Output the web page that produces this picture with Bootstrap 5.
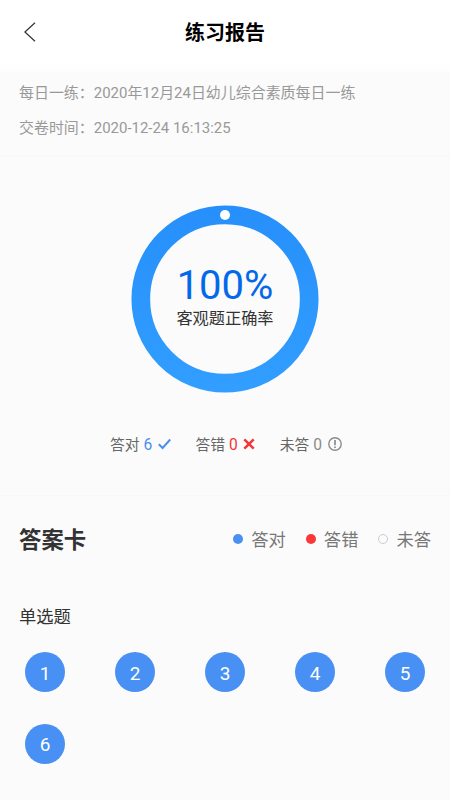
<!DOCTYPE html>
<html lang="zh-CN">
<head>
<meta charset="utf-8">
<meta name="viewport" content="width=device-width, initial-scale=1">
<title>练习报告</title>
<link href="https://cdn.jsdelivr.net/npm/bootstrap@5.3.0/dist/css/bootstrap.min.css" rel="stylesheet">
<style>
  body { font-family: Roboto, "Noto Sans CJK SC", sans-serif; background: #fbfbfb; color: #333; width: 100%; height: 800px; overflow: hidden; }
  .top-bar { height: 72px; padding: 0 24px 8px; background: linear-gradient(#fff 60px, #fdfdfd); }
  .top-bar h1 { font-size: 20px; color: #000; line-height: 30px; padding-top: 1px; }
  .back-btn { width: 12px; }
  .meta { height: 84px; padding: 9px 19px 0; font-size: 14.96px; line-height: 24px; color: #999; border-bottom: 1px solid #f8f8f8; }
  .meta p + p { margin-top: 11px; }
  .score { height: 340px; padding-top: 49px; border-bottom: 1px solid #f8f8f8; }
  .ring { width: 188px; height: 188px; }
  .ring-label { padding-bottom: 6px; }
  .percent { font-size: 40px; line-height: 46px; color: #0468ea; }
  .caption-text { font-size: 16.2px; line-height: 20px; }
  .stats { margin-top: 40px; height: 24px; font-size: 14.8px; line-height: 24px; color: #666; padding-left: 110px; gap: 24.5px; }
  .stat { gap: 4px; }
  .stat svg { margin-left: 1.5px; margin-bottom: 2px; }
  .blue { color: #4a90e8; }
  .red { color: #f43636; }
  .grey { color: #8b8b8b; }
  .digit { font-size: 15.6px; }
  .sheet-head { height: 90px; padding: 0 19px 2px; }
  .sheet-head h2 { font-size: 22.4px; line-height: 32px; }
  .legend { font-size: 17.3px; line-height: 26px; color: #777; gap: 20px; }
  .legend-item { gap: 8px; }
  .dot { width: 10px; height: 10px; margin-bottom: 2px; }
  .dot-right { background: #4a90f0; }
  .dot-wrong { background: #fb3838; }
  .dot-blank { border: 1px solid #ccc; }
  .kind { font-size: 17.3px; line-height: 26px; padding-left: 19px; margin-top: 18px; }
  .answers { display: grid; grid-template-columns: repeat(5, 90px); row-gap: 31.5px; margin-top: 22.4px; }
  .num { width: 40px; height: 40px; background: #4890f4; color: #fff; font-size: 19px; line-height: 1; padding-top: 2px; }
</style>
</head>
<body>
<header class="top-bar d-flex align-items-center">
  <div class="back-btn d-flex" role="button" aria-label="返回">
    <svg width="12" height="20" viewBox="0 0 12 20" fill="none" stroke="#333" stroke-width="1.2"><path d="M11 .8.9 10 11 19.2"/></svg>
  </div>
  <h1 class="fw-bold text-center flex-grow-1 mb-0">练习报告</h1>
  <div class="back-btn"></div>
</header>

<section class="meta">
  <p class="mb-0">每日一练：2020年12月24日幼儿综合素质每日一练</p>
  <p class="mb-0">交卷时间：2020-12-24 16:13:25</p>
</section>

<section class="score">
  <div class="ring position-relative mx-auto">
    <svg width="188" height="188" viewBox="0 0 188 188" fill="none">
      <defs><linearGradient id="ringFill" x1="0" y1="0" x2="0" y2="188" gradientUnits="userSpaceOnUse"><stop stop-color="#268ffb"/><stop offset="1" stop-color="#329eff"/></linearGradient></defs>
      <circle cx="94" cy="94" r="84.2" stroke="url(#ringFill)" stroke-width="18.7"/>
      <circle cx="94" cy="10" r="5" fill="#fff"/>
    </svg>
    <div class="ring-label position-absolute top-0 start-0 w-100 h-100 d-flex flex-column align-items-center justify-content-center">
      <div class="percent">100%</div>
      <div class="caption-text">客观题正确率</div>
    </div>
  </div>
  <div class="stats d-flex">
    <div class="stat d-flex align-items-center"><span>答对</span><span class="digit blue">6</span>
      <svg width="13" height="12" viewBox="0 0 13 12" fill="none" stroke="#4a90e8" stroke-width="2"><path d="M.8 6.2 4.6 10 12.2 1.5"/></svg></div>
    <div class="stat d-flex align-items-center"><span>答错</span><span class="digit red">0</span>
      <svg width="12" height="12" viewBox="0 0 12 12" fill="none" stroke="#f43636" stroke-width="2.5"><path d="m1.3 1.3 9.4 9.4m0-9.4-9.4 9.4"/></svg></div>
    <div class="stat d-flex align-items-center"><span>未答</span><span class="digit grey">0</span>
      <svg width="14" height="14" viewBox="0 0 14 14" fill="none" stroke="#8b8b8b" stroke-width="1.4"><circle cx="7" cy="7" r="6.2"/><path d="M7 3v5.2M7 9.4v1.5" stroke-width="1.7"/></svg></div>
  </div>
</section>

<section>
  <div class="sheet-head d-flex align-items-center justify-content-between">
    <h2 class="fw-bold mb-0">答案卡</h2>
    <div class="legend d-flex">
      <div class="legend-item d-flex align-items-center"><span class="dot dot-right rounded-circle"></span>答对</div>
      <div class="legend-item d-flex align-items-center"><span class="dot dot-wrong rounded-circle"></span>答错</div>
      <div class="legend-item d-flex align-items-center"><span class="dot dot-blank rounded-circle"></span>未答</div>
    </div>
  </div>
  <div class="kind">单选题</div>
  <div class="answers">
    <div class="num rounded-circle d-flex align-items-center justify-content-center mx-auto">1</div>
    <div class="num rounded-circle d-flex align-items-center justify-content-center mx-auto">2</div>
    <div class="num rounded-circle d-flex align-items-center justify-content-center mx-auto">3</div>
    <div class="num rounded-circle d-flex align-items-center justify-content-center mx-auto">4</div>
    <div class="num rounded-circle d-flex align-items-center justify-content-center mx-auto">5</div>
    <div class="num rounded-circle d-flex align-items-center justify-content-center mx-auto">6</div>
  </div>
</section>
<script src="https://cdn.jsdelivr.net/npm/bootstrap@5.3.0/dist/js/bootstrap.bundle.min.js"></script>
</body>
</html>
